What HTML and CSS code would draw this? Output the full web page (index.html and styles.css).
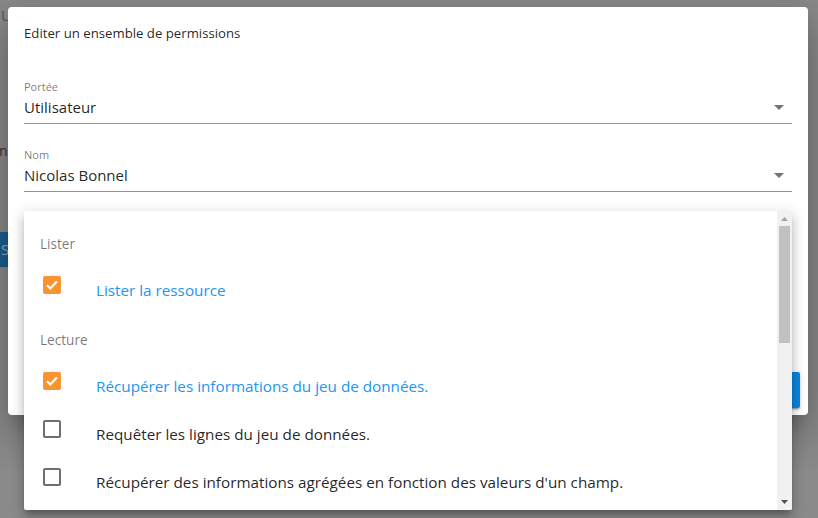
FILE: index.html
```html
<!DOCTYPE html>
<html lang="fr">
<head>
<meta charset="utf-8">
<title>Editer un ensemble de permissions</title>
<link rel="stylesheet" href="styles.css">
</head>
<body>
<div class="page">
  <div class="behind">
    <span class="bg-u">U</span>
    <span class="bg-n">n .</span>
    <div class="bg-btn">S</div>
  </div>

  <div class="dialog">
    <div class="dialog-title">Editer un ensemble de permissions</div>
    <div class="dialog-body">
      <div class="field field-first">
        <div class="field-label">Portée</div>
        <div class="field-input">
          <span class="field-value">Utilisateur</span>
          <svg class="caret" width="10" height="5" viewBox="0 0 10 5"><path d="M0 0h10L5 5z" fill="#757575"/></svg>
        </div>
      </div>
      <div class="field">
        <div class="field-label">Nom</div>
        <div class="field-input">
          <span class="field-value">Nicolas Bonnel</span>
          <svg class="caret" width="10" height="5" viewBox="0 0 10 5"><path d="M0 0h10L5 5z" fill="#757575"/></svg>
        </div>
      </div>
    </div>
    <div class="dialog-actions">
      <div class="btn-save">Enregistrer</div>
    </div>
  </div>

  <div class="menu">
    <div class="menu-list">
      <div class="subheader">Lister</div>
      <div class="item active">
        <div class="item-action">
          <span class="cb cb-on"><svg width="18" height="18" viewBox="0 0 18 18"><path d="M4 9.2l3.3 3.2 6.6-6.8" fill="none" stroke="#fff" stroke-width="2.2"/></svg></span>
        </div>
        <div class="item-text">Lister la ressource</div>
      </div>
      <div class="subheader">Lecture</div>
      <div class="item active">
        <div class="item-action">
          <span class="cb cb-on"><svg width="18" height="18" viewBox="0 0 18 18"><path d="M4 9.2l3.3 3.2 6.6-6.8" fill="none" stroke="#fff" stroke-width="2.2"/></svg></span>
        </div>
        <div class="item-text">Récupérer les informations du jeu de données.</div>
      </div>
      <div class="item">
        <div class="item-action"><span class="cb cb-off"></span></div>
        <div class="item-text">Requêter les lignes du jeu de données.</div>
      </div>
      <div class="item">
        <div class="item-action"><span class="cb cb-off"></span></div>
        <div class="item-text">Récupérer des informations agrégées en fonction des valeurs d'un champ.</div>
      </div>
    </div>
    <div class="scrollbar">
      <svg class="sb-arrow" width="15" height="14" viewBox="0 0 15 14"><path d="M4 10h7L7.5 6z" fill="#a3a3a3"/></svg>
      <div class="sb-track"><div class="sb-thumb"></div></div>
      <svg class="sb-arrow" width="15" height="14" viewBox="0 0 15 14"><path d="M4 4h7L7.5 8z" fill="#505050"/></svg>
    </div>
  </div>
</div>
</body>
</html>
```

FILE: styles.css
```css
* { box-sizing: border-box; }
html, body { margin: 0; padding: 0; }
body {
  width: 818px;
  height: 518px;
  overflow: hidden;
  background: #8a8a8a;
  font-family: "Open Sans", "Noto Sans", sans-serif;
  color: rgba(0,0,0,.87);
}
.page { position: relative; width: 818px; height: 518px; }

.behind { position: absolute; inset: 0; }
.bg-u {
  position: absolute; left: 1px; top: 5px;
  font-size: 15px; color: #555;
}
.bg-n {
  position: absolute; left: -1px; top: 141px;
  font-size: 14px; color: #333;
}
.bg-btn {
  position: absolute; left: -20px; top: 232px;
  width: 40px; height: 35px;
  background: #1b5e8d; border-radius: 2px;
  color: #8fb0c8; font-size: 15px; line-height: 35px;
  padding-left: 21px;
}

.dialog {
  position: absolute; left: 8px; top: 7px;
  width: 800px; height: 408px;
  background: #fff;
  border-radius: 4px;
  box-shadow: 0 11px 15px -7px rgba(0,0,0,.2), 0 24px 38px 3px rgba(0,0,0,.14), 0 9px 46px 8px rgba(0,0,0,.12);
  display: flex; flex-direction: column;
}
.dialog-title {
  padding: 16px 16px 0;
  font-size: 13.2px; line-height: 20px;
  color: rgba(0,0,0,.87);
}
.dialog-body { padding: 0 16px; flex: 1; }
.field { margin-top: 23px; }
.field-first { margin-top: 36px; }
.field-label {
  font-size: 11px; line-height: 16px;
  color: rgba(0,0,0,.54);
}
.field-input {
  display: flex; align-items: center; justify-content: space-between;
  height: 29px;
  padding-bottom: 5px;
  border-bottom: 1px solid #949494;
}
.field-value { font-size: 15px; line-height: 24px; }
.caret { margin-right: 8px; margin-top: 2px; }

.dialog-actions {
  display: flex; justify-content: flex-end;
  padding: 0 8px 7px;
}
.btn-save {
  height: 36px; padding: 0 16px;
  background: #0b85df; color: #fff;
  border-radius: 2px;
  font-size: 14px; line-height: 36px;
  box-shadow: 0 3px 1px -2px rgba(0,0,0,.2), 0 2px 2px 0 rgba(0,0,0,.14), 0 1px 5px 0 rgba(0,0,0,.12);
}

.menu {
  position: absolute; left: 24px; top: 211px;
  width: 768px; height: 299px;
  background: #fff;
  border-radius: 2px;
  box-shadow: 0 5px 5px -3px rgba(0,0,0,.2), 0 8px 10px 1px rgba(0,0,0,.14), 0 3px 14px 2px rgba(0,0,0,.12);
  display: flex;
  overflow: hidden;
}
.menu-list { flex: 1; padding-top: 8px; overflow: hidden; }
.subheader {
  height: 48px; padding: 0 16px;
  display: flex; align-items: center;
  font-size: 13.6px; color: rgba(0,0,0,.54);
}
.item {
  height: 48px; padding: 0 16px;
  display: flex; align-items: center;
  font-size: 15.25px; color: rgba(0,0,0,.87);
}
.item.active .item-text { color: #2196f3; }
.item-action { width: 56px; display: flex; align-items: center; }
.item-text { padding-bottom: 2px; }
.cb {
  display: block; width: 18px; height: 18px;
  margin-left: 3px; margin-top: -12px;
  border-radius: 2px;
}
.cb svg { display: block; }
.cb-on { background: #f89530; }
.cb-off { border: 2px solid #6e6e6e; }

.scrollbar {
  width: 15px; background: #f1f1f1;
  display: flex; flex-direction: column;
}
.sb-arrow { display: block; flex: none; }
.sb-track { flex: 1; padding: 1px 2px; }
.sb-thumb { height: 117px; background: #c1c1c1; }
```
